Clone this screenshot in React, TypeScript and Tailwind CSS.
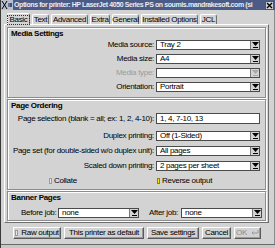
import React from "react";

const Arrow = ({ disabled }: { disabled?: boolean }) => (
  <svg width="7" height="6" viewBox="0 0 7 6">
    <polygon points="0,0 7,0 3.5,4" fill={disabled ? "#a8a8a8" : "#000"} />
    <rect x="1" y="5" width="5" height="1" fill={disabled ? "#a8a8a8" : "#000"} />
  </svg>
);

const Combo = ({ value, disabled, className = "" }: { value: string; disabled?: boolean; className?: string }) => (
  <div className={`h-[10px] flex bg-white border border-[#4a4a4a] ${className}`}>
    <div className="flex-1 pl-[3px] leading-[8px] whitespace-nowrap overflow-hidden">{value}</div>
    <div className="w-[9px] h-full bg-[#d3d3d3] border-l border-[#7a7a7a] flex items-center justify-center">
      <Arrow disabled={disabled} />
    </div>
  </div>
);

const Row = ({ label, children, disabled }: { label: string; children: React.ReactNode; disabled?: boolean }) => (
  <div className="grid grid-cols-[146px_104px] gap-x-[2px] items-center">
    <div className={`text-right whitespace-nowrap leading-[8px] ${disabled ? "text-[#9c9c9c]" : ""}`}>{label}</div>
    {children}
  </div>
);

const Group = ({ title, className = "", children }: { title: string; className?: string; children: React.ReactNode }) => (
  <div className={`border border-[#8c8c8c] shadow-[inset_1px_1px_0_#ffffff,1px_1px_0_#ffffff] flex flex-col ${className}`}>
    <div className="font-bold pl-[3px] h-[10px] leading-[10px] mt-[1px] whitespace-nowrap">{title}</div>
    {children}
  </div>
);

const Tab = ({ label, w, active }: { label: string; w: number; active?: boolean }) => (
  <div
    style={{ width: w }}
    className={
      active
        ? "h-[12px] -mb-[1px] bg-[#d3d3d3] border-t border-l border-white border-r border-r-[#6e6e6e] rounded-tl-[2px] rounded-tr-[3px] flex items-center justify-center relative z-10"
        : "h-[10px] bg-[#d3d3d3] border-t border-l border-white border-r border-r-[#6e6e6e] rounded-tl-[2px] rounded-tr-[3px] flex items-center justify-center"
    }
  >
    <span className={active ? "outline outline-1 outline-dotted outline-[#333] leading-[8px] px-[1px]" : "leading-[8px]"}>{label}</span>
  </div>
);

const Btn = ({ w, children }: { w: number; children: React.ReactNode }) => (
  <div
    style={{ width: w }}
    className="h-[12px] border border-t-white border-l-white border-r-[#5a5a5a] border-b-[#5a5a5a] shadow-[inset_-1px_-1px_0_#9a9a9a] flex items-center justify-center whitespace-nowrap leading-[8px]"
  >
    {children}
  </div>
);

export default function App() {
  return (
    <div className="w-[275px] h-[248px] bg-[#d3d3d3] overflow-hidden flex flex-col text-black font-['Liberation_Sans',Arial,sans-serif] text-[8px] tracking-[-0.3px] border-l border-[#3a3a3a] relative">
      {/* title bar */}
      <div className="h-[10px] bg-[#4a5b85] flex items-center shrink-0">
        <svg width="12" height="10" viewBox="0 0 12 10" className="shrink-0">
          <rect x="0" y="0" width="12" height="10" fill="#b8c0d0" />
          <path d="M1 1 L6 9 M6 1 L1 9" stroke="#000" strokeWidth="1" />
          <path d="M7 4 H11 M7 6 H11 M10 3 V7" stroke="#1a2a50" strokeWidth="1" />
        </svg>
        <div className="flex-1 overflow-hidden whitespace-nowrap text-[#e8ecf4] font-bold text-[7px] tracking-[-0.4px] leading-[10px] pl-[1px]">
          Options for printer: HP LaserJet 4050 Series PS on soumis.mandrakesoft.com (si
        </div>
        <div className="w-[9px] h-[9px] bg-[#d3d3d3] border border-[#555] flex items-center justify-center mr-[1px] shrink-0">
          <svg width="7" height="7" viewBox="0 0 7 7">
            <path d="M1 1 L6 6 M6 1 L1 6" stroke="#000" strokeWidth="1.4" />
          </svg>
        </div>
      </div>

      <div className="flex-1 flex flex-col pl-[3px] pr-[5px] border-r border-[#8a8a8a]">
        {/* tabs */}
        <div className="h-[14px] flex items-end gap-[2px] pl-[3px] shrink-0">
          <Tab label="Basic" w={23} active />
          <Tab label="Text" w={17} />
          <Tab label="Advanced" w={37} />
          <Tab label="Extra" w={20} />
          <Tab label="General" w={27} />
          <Tab label="Installed Options" w={57} />
          <Tab label="JCL" w={17} />
        </div>

        {/* panel */}
        <div className="h-[199px] border-t border-l border-white border-r border-b border-r-[#6e6e6e] border-b-[#6e6e6e] px-[2px] pt-[2px] flex flex-col gap-[1px] shrink-0">
          <Group title="Media Settings" className="h-[71px]">
            <div className="flex flex-col gap-[4px] mt-[1px]">
              <Row label="Media source:"><Combo value="Tray 2" /></Row>
              <Row label="Media size:"><Combo value="A4" /></Row>
              <Row label="Media type:" disabled><Combo value="" disabled /></Row>
              <Row label="Orientation:"><Combo value="Portrait" /></Row>
            </div>
          </Group>

          <Group title="Page Ordering" className="h-[91px]">
            <div className="flex flex-col mt-[2px]">
              <Row label="Page selection (blank = all; ex: 1, 2, 4-10):">
                <div className="h-[11px] bg-white border border-[#4a4a4a] pl-[3px] leading-[9px] whitespace-nowrap">1, 4, 7-10, 13</div>
              </Row>
              <div className="flex flex-col gap-[5px] mt-[7px]">
                <Row label="Duplex printing:"><Combo value="Off (1-Sided)" /></Row>
                <Row label="Page set (for double-sided w/o duplex unit):"><Combo value="All pages" /></Row>
                <Row label="Scaled down printing:"><Combo value="2 pages per sheet" /></Row>
              </div>
              <div className="grid grid-cols-[146px_104px] gap-x-[2px] items-center mt-[5px] h-[9px]">
                <div className="flex items-center pl-[41px]">
                  <span className="w-[3px] h-[6px] bg-[#e8e8e8] border border-[#9a9a9a] mr-[2px]" />
                  <span className="leading-[8px]">Collate</span>
                </div>
                <div className="flex items-center pl-[1px]">
                  <span className="w-[3px] h-[6px] bg-[#f5e400] border border-[#8a8a00] mr-[2px]" />
                  <span className="leading-[8px]">Reverse output</span>
                </div>
              </div>
            </div>
          </Group>

          <Group title="Banner Pages" className="h-[30px]">
            <div className="flex items-center mt-[5px] pl-[13px]">
              <span className="w-[37px] whitespace-nowrap leading-[8px]">Before job:</span>
              <Combo value="none" className="w-[81px]" />
              <span className="w-[32px] pl-[10px] whitespace-nowrap leading-[8px] box-content">After job:</span>
              <Combo value="none" className="w-[81px]" />
            </div>
          </Group>
        </div>

        {/* buttons */}
        <div className="flex items-center gap-[3px] pl-[9px] mt-[4px] shrink-0">
          <Btn w={48}>
            <span className="w-[3px] h-[6px] bg-[#e8e8e8] border border-[#9a9a9a] mr-[3px]" />
            Raw output
          </Btn>
          <Btn w={80}>This printer as default</Btn>
          <Btn w={52}>Save settings</Btn>
          <Btn w={29}>Cancel</Btn>
          <Btn w={27}>
            <span className="text-[#8a8a8a]">OK</span>
            <svg width="9" height="6" viewBox="0 0 9 6" className="ml-[3px]">
              <path d="M8 0 V3 H2 M3.5 1.5 L2 3 L3.5 4.5" stroke="#9a9a9a" fill="none" strokeWidth="1" />
            </svg>
          </Btn>
        </div>
      </div>
      <div className="h-[4px] border-t border-[#6a6a6a] bg-[#c8c8c8] shrink-0" />
    </div>
  );
}
